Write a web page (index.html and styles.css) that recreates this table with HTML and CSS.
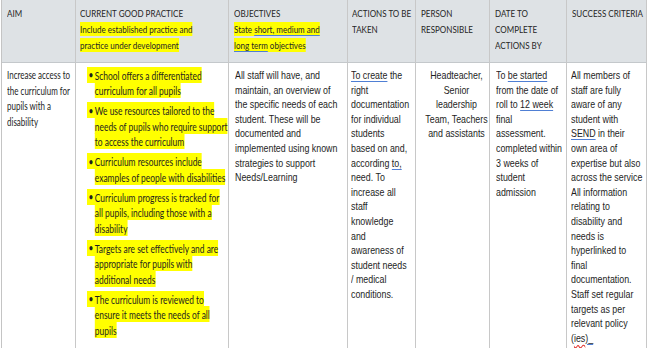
FILE: index.html
```html
<!DOCTYPE html>
<html lang="en">
<head>
<meta charset="utf-8">
<title>Accessibility plan</title>
<link rel="stylesheet" href="styles.css">
</head>
<body>
<div class="plan">
  <div class="cell head c1"><div class="hd">AIM</div></div>
  <div class="cell head c2"><div class="hd">CURRENT GOOD PRACTICE<br><span class="hl">Include established practice and<br>practice under development</span></div></div>
  <div class="cell head c3"><div class="hd">OBJECTIVES<br><span class="hl">State <span class="gr">short, medium and</span><br><span class="gr">long term</span> objectives</span></div></div>
  <div class="cell head c4"><div class="hd">ACTIONS TO BE<br>TAKEN</div></div>
  <div class="cell head c5"><div class="hd">PERSON<br>RESPONSIBLE</div></div>
  <div class="cell head c6"><div class="hd">DATE TO<br>COMPLETE<br>ACTIONS BY</div></div>
  <div class="cell head c7"><div class="hd">SUCCESS CRITERIA</div></div>

  <div class="cell body c1"><div class="aim">Increase access to<br>the curriculum for<br>pupils with a<br>disability</div></div>
  <div class="cell body c2">
    <ul class="practice">
      <li class="item"><span class="hl"><span class="dot">•</span>School offers a differentiated<br>curriculum for all pupils</span></li>
      <li class="item"><span class="hl"><span class="dot">•</span>We use resources tailored to the<br>needs of pupils who require support<br>to access the curriculum</span></li>
      <li class="item"><span class="hl"><span class="dot">•</span>Curriculum resources include<br>examples of people with disabilities</span></li>
      <li class="item"><span class="hl"><span class="dot">•</span>Curriculum progress is tracked for<br>all pupils, including those with a<br>disability</span></li>
      <li class="item"><span class="hl"><span class="dot">•</span>Targets are set effectively and are<br>appropriate for pupils with<br>additional needs</span></li>
      <li class="item"><span class="hl"><span class="dot">•</span>The curriculum is reviewed to<br>ensure it meets the needs of all<br>pupils</span></li>
    </ul>
  </div>
  <div class="cell body c3"><div class="nar">All staff will have, and<br>maintain, an overview of<br>the specific needs of each<br>student. These will be<br>documented and<br>implemented using known<br>strategies to support<br>Needs/Learning</div></div>
  <div class="cell body c4"><div class="nar"><span class="gr">To create</span> the<br>right<br>documentation<br>for individual<br>students<br>based on and,<br>according <span class="gr">to,</span><br>need. To<br>increase all<br>staff<br>knowledge<br>and<br>awareness of<br>student needs<br>/ medical<br>conditions.</div></div>
  <div class="cell body c5 center"><div class="nar mid">Headteacher,<br>Senior<br>leadership<br>Team, Teachers<br>and assistants</div></div>
  <div class="cell body c6"><div class="nar">To <span class="gr">be started</span><br>from the date of<br>roll to <span class="gr">12 week</span><br>final<br>assessment.<br>completed within<br>3 weeks of<br>student<br>admission</div></div>
  <div class="cell body c7"><div class="nar">All members of<br>staff are fully<br>aware of any<br>student with<br><span class="gr">SEND</span> in their<br>own area of<br>expertise but also<br>across the service<br>All information<br>relating to<br>disability and<br>needs is<br>hyperlinked to<br>final<br>documentation.<br>Staff set regular<br>targets as per<br>relevant policy<br>(<span class="sp">ies</span><span class="gr">)_</span></div></div>
</div>
</body>
</html>
```

FILE: styles.css
```css
html, body {
  margin: 0;
  padding: 0;
  background: #ffffff;
  overflow: hidden;
}

.plan {
  display: grid;
  grid-template-columns: 74px 153px 119px 68px 74px 77px 80px;
  grid-template-rows: 63px 285px;
  margin-left: 1px;
  border-left: 1px solid #c4c4c4;
  width: 645px;
  height: 348px;
  overflow: hidden;
  color: #1e1e1e;
}

.cell {
  box-sizing: border-box;
  border-right: 1px solid #c8c8c8;
  overflow: hidden;
}

.head {
  background: #dee2e5;
  border-bottom: 1px solid #c4c8cb;
}

/* Calibri-like text: Lato squeezed horizontally */
.hd,
.aim,
.item {
  font-family: Lato, "Open Sans", sans-serif;
  white-space: nowrap;
  transform: scaleX(0.78);
  transform-origin: left top;
}

.hd {
  display: inline-block;
  font-size: 10.3px;
  line-height: 16px;
  margin: 5px 0 0 5px;
  color: #262626;
}

.head.c2 .hd,
.head.c4 .hd { margin-left: 4px; }

.hl {
  background: #ffff00;
  padding: 1px 0;
}

.gr {
  text-decoration: underline;
  text-decoration-color: #4f7fd4;
  text-underline-offset: 2px;
}

.sp {
  text-decoration: underline wavy #e0302a;
  text-underline-offset: 2px;
}

.aim {
  display: inline-block;
  font-size: 10.8px;
  line-height: 15.5px;
  margin: 4px 0 0 5px;
  transform: scaleX(0.74);
}

.practice {
  list-style: none;
  margin: 0;
  padding: 4px 0 0 11px;
}

.item {
  display: block;
  font-size: 10.8px;
  line-height: 15.5px;
  margin-bottom: 4.5px;
  padding-left: 10px;
  text-indent: -10px;
}

.practice .hl {
  padding: 1.5px 0;
}

.dot {
  display: inline-block;
  width: 10px;
  text-indent: 0;
  padding-left: 2px;
  box-sizing: border-box;
  vertical-align: top;
}

/* Arial-Narrow-like text: Liberation Sans squeezed horizontally */
.nar {
  display: inline-block;
  font-family: "Liberation Sans", Arial, sans-serif;
  font-size: 11.5px;
  line-height: 14.6px;
  white-space: nowrap;
  margin: 5px 0 0 6px;
  color: #1e1e1e;
  transform: scaleX(0.77);
  transform-origin: left top;
}

.c4 .nar { margin-left: 3px; }
.c7 .nar { margin-left: 4px; }

.center {
  text-align: center;
}

.nar.mid {
  margin-left: 0;
  transform-origin: center top;
}
```
